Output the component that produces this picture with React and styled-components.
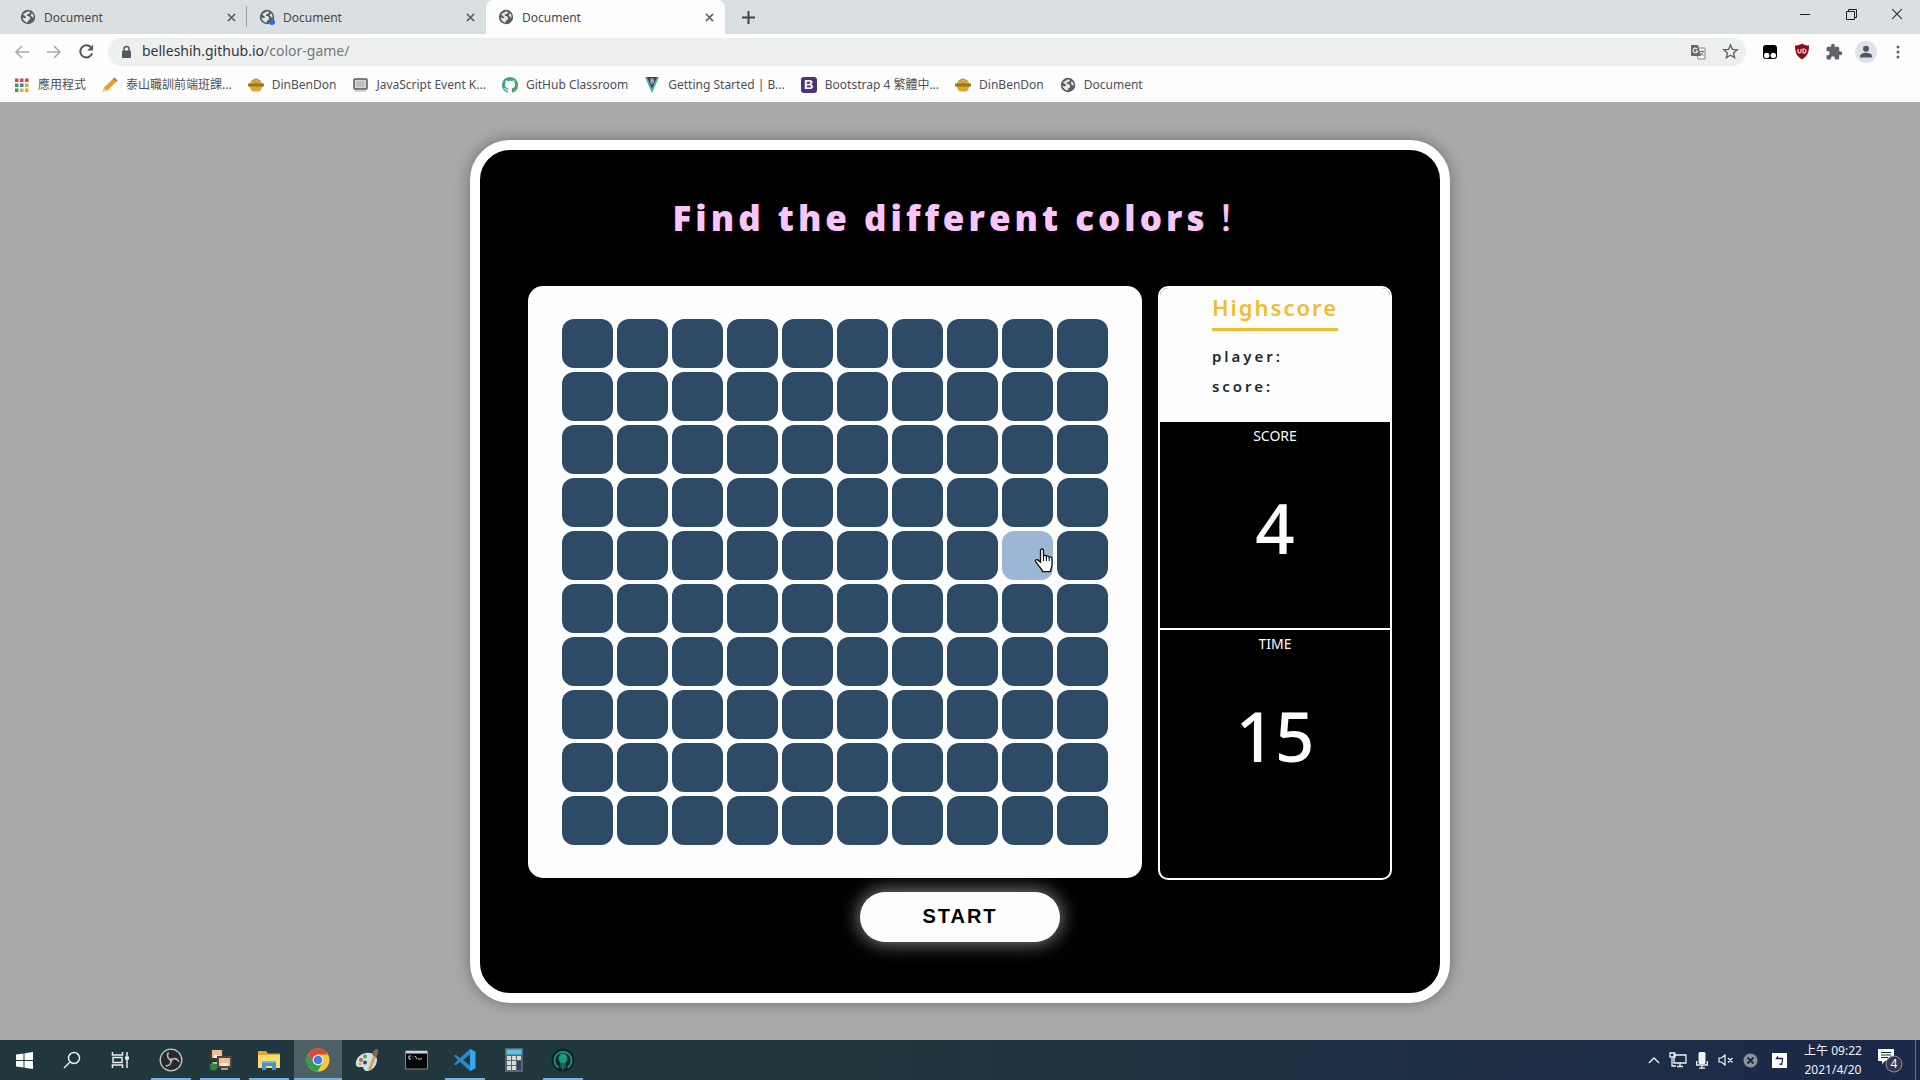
import React from "react";
import styled, { createGlobalStyle } from "styled-components";

const GlobalStyle = createGlobalStyle`
  *, *::before, *::after { box-sizing: border-box; }
  body { margin: 0; font-family: "Noto Sans", "Noto Sans CJK TC", sans-serif; }
  button { border: 0; padding: 0; margin: 0; background: none; font: inherit; color: inherit; }
  h1, h2, p { margin: 0; }
  svg { display: block; flex: none; }
`;

const Desktop = styled.div`
  display: flex;
  flex-direction: column;
  height: 100vh;
  overflow: hidden;
`;

/* ---------- browser ---------- */
const TabStrip = styled.header`
  display: flex;
  height: 34px;
  padding-left: 8px;
  background: #dadfe1;
`;

const Tab = styled.div`
  display: flex;
  align-items: center;
  width: 239px;
  height: 34px;
  padding: 0 8px 0 12px;
  gap: 8px;
  font-size: 12px;
  color: #45494d;
  background: ${(p) => (p.$active ? "#fdfdfd" : "transparent")};
  border-radius: 8px 8px 0 0;
  border-right: 1px solid ${(p) => (p.$divider ? "#9a9fa3" : "transparent")};
  border-image: ${(p) => (p.$divider ? "linear-gradient(transparent 20%, #9a9fa3 20%, #9a9fa3 78%, transparent 78%) 1" : "none")};
`;

const TabTitle = styled.span`
  flex: 1;
`;

const IconButton = styled.button`
  display: flex;
  align-items: center;
  justify-content: center;
  flex: none;
  width: ${(p) => p.$w || 32}px;
  height: ${(p) => p.$h || 28}px;
  color: ${(p) => p.$color || "#5f6368"};
`;

const WindowControls = styled.div`
  display: flex;
  margin-left: auto;
`;

const Toolbar = styled.div`
  display: flex;
  align-items: center;
  height: 36px;
  padding: 0 6px 1px;
  background: #fdfdfd;
`;

const AddressBar = styled.div`
  display: flex;
  align-items: center;
  flex: 1;
  height: 28px;
  margin: 0 8px 0 6px;
  padding-left: 12px;
  border-radius: 14px;
  background: #eef0f0;
  color: #5f6368;
`;

const Address = styled.div`
  flex: 1;
  padding-left: 9px;
  font-size: 14px;
  line-height: 20px;
  padding-bottom: 1px;
  color: #73787c;
  strong { font-weight: 400; color: #33373b; }
`;

const Bookmarks = styled.nav`
  display: flex;
  align-items: center;
  gap: 16px;
  height: 32px;
  padding: 0 14px 2px;
  background: #fdfdfd;
`;

const Bookmark = styled.a`
  display: flex;
  align-items: center;
  gap: 8px;
  font-size: 12px;
  line-height: 18px;
  white-space: nowrap;
  color: #4d5155;
  text-decoration: none;
`;

/* ---------- game ---------- */
const Page = styled.main`
  display: flex;
  flex: 1;
  align-items: center;
  justify-content: center;
  min-height: 0;
  background: #a9a9a9;
`;

const Panel = styled.section`
  box-sizing: content-box;
  width: 50%;
  padding-bottom: 51px;
  border: 10px solid #fff;
  border-radius: 40px;
  background: #000;
  box-shadow: 0 0 16px rgba(0, 0, 0, 0.35);
`;

const Title = styled.h1`
  padding: 40px 0;
  font-family: "Open Sans", "Noto Sans CJK TC", sans-serif;
  font-size: 35px;
  line-height: 56px;
  font-weight: 800;
  letter-spacing: 4px;
  text-align: center;
  white-space: nowrap;
  color: #f9c5fb;
`;

const TitleMark = styled.span`
  font-weight: 500;
`;

const Columns = styled.div`
  display: grid;
  grid-template-columns: 614fr 234fr;
  gap: 16px;
  align-items: start;
  padding: 0 5%;
`;

const Board = styled.div`
  display: grid;
  grid-template-columns: repeat(10, 1fr);
  gap: 4px;
  padding: 33px 34px;
  border-radius: 15px;
  background: #fdfdfd;
`;

const Cell = styled.button`
  position: relative;
  height: 49px;
  border-radius: 12px;
  background: ${(p) => (p.$odd ? "#9cb7d6" : "#2d4a66")};
`;

const Pointer = styled.svg`
  position: absolute;
  left: 32px;
  top: 17px;
`;

const Side = styled.aside`
  overflow: hidden;
  border: 2px solid #fdfdfd;
  border-radius: 10px;
  color: #fdfdfd;
`;

const Highscore = styled.div`
  display: flex;
  justify-content: center;
  height: 134px;
  padding-top: 4px;
  background: #fdfdfd;
  color: #20292e;
`;

const HighscoreTitle = styled.h2`
  margin-bottom: 10px;
  padding-bottom: 6px;
  border-bottom: 3px solid #efbd2e;
  font-size: 22px;
  line-height: 30px;
  font-weight: 600;
  letter-spacing: 2px;
  color: #efbd2e;
`;

const HighscoreLine = styled.p`
  font-size: 15px;
  line-height: 30px;
  font-weight: 600;
  letter-spacing: 3px;
`;

const Stat = styled.div`
  height: ${(p) => (p.$last ? 248 : 208)}px;
  padding-top: 4px;
  border-bottom: ${(p) => (p.$last ? 0 : 2)}px solid #fdfdfd;
  text-align: center;
`;

const StatLabel = styled.p`
  font-size: 14px;
  line-height: 20px;
`;

const StatValue = styled.p`
  margin-top: 41px;
  font-size: 69px;
  line-height: 80px;
  font-weight: 500;
`;

const Start = styled.button`
  display: block;
  width: 200px;
  height: 50px;
  margin: 12px auto 0;
  border-radius: 25px;
  background: #fdfdfd;
  box-shadow: 0 0 20px rgba(255, 255, 255, 0.6);
  font: bold 20px/24px "Liberation Sans", sans-serif;
  padding-bottom: 2px;
  letter-spacing: 2px;
  color: #000;
`;

/* ---------- taskbar ---------- */
const Taskbar = styled.footer`
  display: flex;
  height: 40px;
  background: linear-gradient(90deg, #20383d 0%, #20373e 45%, #1e3045 72%, #1b2848 100%);
`;

const Apps = styled.div`
  display: flex;
  gap: ${(p) => p.$gap || 0}px;
  padding-right: ${(p) => (p.$gap ? 0 : 3)}px;
`;

const AppButton = styled.button`
  display: flex;
  align-items: center;
  justify-content: center;
  width: 48px;
  height: 40px;
  background: ${(p) => (p.$active ? "#4d6064" : "transparent")};
`;

const RunningApp = styled(AppButton)`
  background:
    linear-gradient(#76b0e4, #76b0e4) bottom / ${(p) => (p.$active ? "100%" : "40px")} 2px no-repeat,
    ${(p) => (p.$active ? "#4d6064" : "transparent")};
`;

const Tray = styled.div`
  display: flex;
  align-items: center;
  margin-left: auto;
  color: #f0f2f4;
`;

const Clock = styled.time`
  width: 74px;
  font-size: 12px;
  line-height: 19px;
  text-align: center;
`;

const Edge = styled.i`
  width: 5px;
  height: 40px;
  margin-left: 5px;
  border-left: 1px solid #667087;
`;

/* ---------- icons ---------- */
const Globe = ({ dot }) => (
  <svg width="16" height="16" viewBox="0 0 16 16">
    <circle cx="8" cy="8" r="7.2" fill="#595d61" />
    <path d="M3 5.4C5 4.4 6.2 3 8.6 2.3l1.6.9-1.3 1.6-1.6.5-.7 1.5 2.2.5 1.5 1.3-.5 2-1.7 1.1-.8 2C5.400 13.200 3 11.600 2.500 8.600l2.300.7 1.300-.6-.7-1.500z" fill="#e4e7e8" />
    <path d="M11.600 4.300l1.600 1.300.4 3.200-1.400-.6-1.300-2z" fill="#e4e7e8" />
    {dot && <circle cx="13" cy="13" r="3" fill="#2b6fd4" />}
  </svg>
);

const Cross = ({ size = 9, width = 1.7 }) => (
  <svg width={size} height={size} viewBox="0 0 10 10" stroke="currentColor" strokeWidth={width} fill="none">
    <path d="M1 1l8 8M9 1l-8 8" />
  </svg>
);

const Arrow = ({ back }) => (
  <svg width="16" height="16" viewBox="0 0 16 16" fill="none" stroke="#a9acaf" strokeWidth="1.600">
    <path d={back ? "M15 8H2M8 2L2 8l6 6" : "M1 8h13M8 2l6 6-6 6"} />
  </svg>
);

const Reload = () => (
  <svg width="17" height="17" viewBox="0 0 16 16">
    <path d="M13.300 9.600A5.700 5.700 0 1 1 12.200 4.200" fill="none" stroke="#55595d" strokeWidth="1.900" />
    <path d="M14.200 1.500v5.500H8.700z" fill="#55595d" />
  </svg>
);

const Lock = () => (
  <svg width="13" height="14" viewBox="0 0 13 14">
    <rect x="2" y="5.500" width="9" height="7.500" rx="1" fill="#55595d" />
    <path d="M4 6V4a2.500 2.500 0 0 1 5 0v2" fill="none" stroke="#55595d" strokeWidth="1.500" />
  </svg>
);

const Translate = () => (
  <svg width="16" height="16" viewBox="0 0 16 16">
    <path d="M6 4h9v11H8z" fill="#f4f5f5" stroke="#85898c" />
    <path d="M1 1h7l3 11H2a1 1 0 0 1-1-1z" fill="#65696d" />
    <path d="M7.300 5.200A2.300 2.300 0 1 0 7.600 7H5.600" fill="none" stroke="#f4f5f5" strokeWidth="1.100" />
    <path d="M10 7.500h4M12 6.500v1M13.200 7.500c-.5 2-1.500 3-2.500 3.800M11 9l2.500 2.800" fill="none" stroke="#777b7e" />
  </svg>
);

const Star = () => (
  <svg width="17" height="17" viewBox="0 0 16 16">
    <path d="M8 1.800l1.800 4.200 4.500.4-3.400 3 1 4.400L8 11.500l-3.900 2.300 1-4.400-3.400-3 4.500-.4z" fill="none" stroke="#5f6368" strokeWidth="1.300" />
  </svg>
);

const Monkey = () => (
  <svg width="16" height="16" viewBox="0 0 16 16">
    <rect x="1" y="1" width="14" height="14" rx="3" fill="#000" />
    <circle cx="4.700" cy="11.500" r="2.700" fill="#fff" />
    <circle cx="11.300" cy="11.500" r="2.700" fill="#fff" />
  </svg>
);

const Shield = () => (
  <svg width="16" height="17" viewBox="0 0 16 17">
    <path d="M8 0.500C10 2 12.500 2.600 15 2.600c0 6-1 10.400-7 13.900C2 13 1 8.600 1 2.600 3.500 2.600 6 2 8 .5z" fill="#8c0d16" />
    <path d="M4 6v2.300a1.500 1.500 0 0 0 3 0V6M9 6v4h1a2 2 0 0 0 0-4z" fill="none" stroke="#f3dcdc" strokeWidth="1.200" />
  </svg>
);

const Puzzle = () => (
  <svg width="18" height="18" viewBox="0 0 24 24" fill="#5f6368">
    <path d="M20.500 11H19V7a2 2 0 0 0-2-2h-4V3.500a2.500 2.500 0 0 0-5 0V5H4a2 2 0 0 0-2 2v3.800h1.500a2.700 2.700 0 0 1 0 5.400H2V20a2 2 0 0 0 2 2h3.800v-1.500a2.700 2.700 0 0 1 5.400 0V22H17a2 2 0 0 0 2-2v-4h1.500a2.500 2.500 0 0 0 0-5z" />
  </svg>
);

const Avatar = () => (
  <svg width="22" height="22" viewBox="0 0 22 22">
    <circle cx="11" cy="11" r="11" fill="#dfe3e9" />
    <circle cx="11" cy="7.700" r="3" fill="#4e5769" />
    <path d="M5 16.500v-1.500c0-2.200 4-3.200 6-3.200s6 1 6 3.200v1.500z" fill="#4e5769" />
  </svg>
);

const Dots = () => (
  <svg width="16" height="16" viewBox="0 0 16 16" fill="#5f6368">
    <circle cx="8" cy="3" r="1.500" /><circle cx="8" cy="8" r="1.500" /><circle cx="8" cy="13" r="1.500" />
  </svg>
);

const AppsGrid = () => {
  const colors = ["#d5473f", "#d5473f", "#d5473f", "#3f9d58", "#4078d8", "#e0ad2a", "#3f9d58", "#e0ad2a", "#e0ad2a"];
  return (
    <svg width="16" height="16" viewBox="0 0 16 16">
      {colors.map((c, i) => <rect key={i} x={1 + (i % 3) * 5} y={1.5 + Math.floor(i / 3) * 5} width="3.500" height="3.500" fill={c} />)}
    </svg>
  );
};

const Pencil = () => (
  <svg width="16" height="16" viewBox="0 0 16 16">
    <path d="M1.500 11L11 1.800l3.200 3L4.800 14z" fill="#f09c2b" />
    <path d="M11 1.800L12.300.5 15.700 3.500 14.200 4.800z" fill="#dc5266" />
    <path d="M1.500 11l3.300 3L.3 15.600z" fill="#f2cf9a" />
  </svg>
);

const Bento = () => (
  <svg width="16" height="16" viewBox="0 0 16 16">
    <path d="M1.500 7L3.500 3.500 7 1.500h2l3.500 2 2 3.500z" fill="#c9992c" />
    <path d="M1.500 9h13l-1.500 4-2 1.500H5L3 13z" fill="#d9a82f" />
    <path d="M0 6.500h16v3H0z" fill="#9c761e" />
    <path d="M3 5.500h3M7 4h3M10 5.500h3" stroke="#e7c262" />
  </svg>
);

const ScreenIcon = () => (
  <svg width="16" height="16" viewBox="0 0 16 16">
    <rect x="2" y="2" width="13" height="10" rx="1" fill="#d3d5d6" stroke="#55595c" strokeWidth="1.500" />
    <path d="M4.500 5h8M4.500 7h8M4.500 9h8" stroke="#a5a8aa" />
    <path d="M3 14h11" stroke="#a9acae" />
  </svg>
);

const GitHub = () => (
  <svg width="16" height="16" viewBox="0 0 16 16" fill="#43a574">
    <path d="M8 0C3.580 0 0 3.580 0 8c0 3.540 2.290 6.530 5.470 7.590.4.070.55-.17.55-.38 0-.19-.01-.82-.01-1.490-2.010.37-2.530-.49-2.690-.94-.09-.23-.48-.94-.82-1.130-.28-.15-.68-.52-.01-.53.63-.01 1.080.58 1.230.82.72 1.210 1.870.87 2.330.66.07-.52.28-.87.51-1.070-1.780-.2-3.640-.89-3.640-3.950 0-.87.31-1.590.82-2.150-.08-.2-.36-1.020.08-2.120 0 0 .67-.21 2.200.82.64-.18 1.320-.27 2-.27s1.360.09 2 .27c1.530-1.040 2.200-.82 2.200-.82.44 1.100.16 1.920.08 2.120.51.56.82 1.270.82 2.150 0 3.070-1.870 3.750-3.650 3.950.29.25.54.73.54 1.480 0 1.070-.01 1.930-.01 2.200 0 .21.15.46.55.38A8.010 8.010 0 0 0 16 8c0-4.420-3.580-8-8-8z" />
  </svg>
);

const VueB = () => (
  <svg width="16" height="16" viewBox="0 0 16 16">
    <path d="M1 0h14L8 16z" fill="#45b58a" />
    <path d="M3 0h10L8 11.500z" fill="#3f3c5c" />
    <path d="M7 1.500v5M7 2h1.500a1 1 0 0 1 0 2H7h1.700a1.100 1.100 0 0 1 0 2.200H7" fill="none" stroke="#d9d3e6" strokeWidth=".9" />
  </svg>
);

const BootstrapMark = styled.span`
  width: 16px;
  height: 16px;
  border-radius: 3px;
  background: #4d3375;
  color: #fff;
  font: bold 13px/16px "Liberation Sans", sans-serif;
  text-align: center;
`;

const bookmarks = [
  ["應用程式", <AppsGrid />],
  ["泰山職訓前端班課...", <Pencil />],
  ["DinBenDon", <Bento />],
  ["JavaScript Event K...", <ScreenIcon />],
  ["GitHub Classroom", <GitHub />],
  ["Getting Started | B...", <VueB />],
  ["Bootstrap 4 繁體中...", <BootstrapMark>B</BootstrapMark>],
  ["DinBenDon", <Bento />],
  ["Document", <Globe />],
];

const WinLogo = () => (
  <svg width="17" height="17" viewBox="0 0 17 17" fill="#fff">
    <path d="M0 2.400L7.500 1.400V8H0zM8.500 1.200L17 0v8H8.500zM0 9h7.500v6.600L0 14.600zM8.500 9H17v8l-8.500-1.200z" />
  </svg>
);
const Search = () => (
  <svg width="18" height="18" viewBox="0 0 18 18" fill="none" stroke="#e8eced" strokeWidth="1.500">
    <circle cx="11" cy="7" r="5.500" /><path d="M7 11l-6 6" />
  </svg>
);
const TaskView = () => (
  <svg width="19" height="18" viewBox="0 0 19 18" fill="none" stroke="#e8eced" strokeWidth="1.500">
    <path d="M1.500 1v3h10V1M1.500 17v-3h10v3M2 6.500h9v5H2zM16 1v16" /><path d="M14 5.500h4v3h-4z" fill="#e8eced" stroke="none" />
  </svg>
);
const Obs = () => (
  <svg width="24" height="24" viewBox="0 0 24 24">
    <circle cx="12" cy="12" r="10.800" fill="#29272b" stroke="#c6c9ca" strokeWidth="1.300" />
    <g fill="none" stroke="#b5b8ba" strokeWidth="1.600" strokeLinecap="round">
      {[0, 120, 240].map((a) => <path key={a} transform={`rotate(${a} 12 12)`} d="M12 12c-3-1-4.500-4-2.800-7" />)}
    </g>
    <circle cx="12" cy="12" r="1.700" fill="#b5b8ba" />
  </svg>
);
const Remote = () => (
  <svg width="24" height="24" viewBox="0 0 24 24">
    <rect x="2" y="1" width="14" height="11" fill="#3f3630" /><rect x="4" y="2" width="10" height="8" fill="#e8bf99" />
    <path d="M6 7h6v3H6z" fill="#fbeee0" />
    <circle cx="5.500" cy="18.500" r="4" fill="#3d7c45" /><path d="M4 14h6v2H6z" fill="#a6c7a8" />
    <rect x="9" y="8" width="15" height="12" fill="#50443c" /><rect x="11" y="10" width="11" height="8" fill="#ebbd94" />
    <path d="M13 15h7v3h-7z" fill="#fff2e4" /><path d="M13 20h7v2h-7z" fill="#a9a198" />
  </svg>
);
const Folder = () => (
  <svg width="24" height="22" viewBox="0 0 24 22">
    <path d="M1 2h8l2 2.500h12V19H1z" fill="#e1a92d" /><path d="M1 6h22v13H1z" fill="#fadb6c" />
    <path d="M5 12h14v9h-4v-4H9v4H5z" fill="#3f93cf" /><path d="M5 12h14v2H5z" fill="#6ab5e4" />
  </svg>
);
const Chrome = () => (
  <svg width="24" height="24" viewBox="0 0 24 24">
    <circle cx="12" cy="12" r="11.500" fill="#f5c83a" />
    <path d="M2 6.300A11.500 11.500 0 0 1 22 6.500H12l-5 3.200 0 5z" fill="#dc4838" />
    <path d="M2 6.300A11.500 11.500 0 0 0 11.500 23.500l5-8.700-4.500 2.200-4.800-2.400z" fill="#2f9c53" />
    <circle cx="12" cy="12" r="5.400" fill="#f5f5f5" /><circle cx="12" cy="12" r="4.300" fill="#3f7ee0" />
  </svg>
);
const Paint = () => (
  <svg width="24" height="24" viewBox="0 0 24 24">
    <path d="M11 5C4 6 0 12 1 17c1 3 4 2 6 2s1 3 4 4c5 1 11-5 11-11 0-5-5-8-11-7z" fill="#cfe0e9" />
    <circle cx="6" cy="12" r="2" fill="#db5b4c" /><circle cx="10" cy="8.500" r="2" fill="#54a860" /><circle cx="5" cy="16" r="1.500" fill="#dfae3c" />
    <circle cx="10" cy="14.500" r="2" fill="#32505d" />
    <path d="M13 22L18 8l3 1-5 13z" fill="#d9a35b" /><path d="M18 8c-1-4 1-7 5-7 0 4 0 6-2 8z" fill="#96633a" />
  </svg>
);
const Terminal = () => (
  <svg width="23" height="20" viewBox="0 0 23 20">
    <path d="M.5 1h22v18H.5z" fill="#050607" stroke="#83898b" /><path d="M1 1h21v2.500H1z" fill="#d2d6d7" />
    <path d="M6 6H4v3h2M8 6.500v.5M8 8.500V9M10 6l2 3M13 9h4" stroke="#d4d8d9" fill="none" />
  </svg>
);
const Code = () => (
  <svg width="24" height="24" viewBox="0 0 24 24">
    <path d="M17 1L7 10 2.500 6.800 1 7.800 4.800 12 1 16.200l1.500 1L7 14l10 9V17.500L10.300 12 17 6.500z" fill="#2489cf" />
    <path d="M17 1l5.500 2.500v17L17 23z" fill="#35a7ee" />
  </svg>
);
const Calculator = () => (
  <svg width="18" height="24" viewBox="0 0 18 24">
    <path d="M0 0h18v24H0z" fill="#5c676c" /><path d="M1.500 1.500h15v5h-15z" fill="#55c5ea" />
    {[8, 13, 18].map((y) => [2, 7, 12].map((x) => <rect key={`${x}-${y}`} x={x} y={y} width="4" height="4" fill="#d6dadc" />))}
    <path d="M12 13h4v9h-4z" fill="#263f75" />
  </svg>
);
const Kraken = () => (
  <svg width="24" height="24" viewBox="0 0 24 24">
    <circle cx="12" cy="12" r="11.500" fill="#0c2529" />
    <path d="M7.500 19.500A8.500 8.500 0 1 1 16.500 19.500" fill="none" stroke="#1d9780" strokeWidth="1.700" />
    <path d="M12 5.500c3 0 4.500 3 4.500 5.500 0 2-1.500 2.500-2 3.500v5.500h-1v-5h-.9V22h-1.200v-7h-.9v5h-1v-5.500c-.5-1-2-1.500-2-3.500 0-2.500 1.500-5.500 4.500-5.500z" fill="#1d9780" />
  </svg>
);

const tasks = [
  ["OBS", <Obs />, true],
  ["Remote", <Remote />, true],
  ["Explorer", <Folder />, true],
  ["Chrome", <Chrome />, true, true],
  ["Paint", <Paint />],
  ["Terminal", <Terminal />],
  ["Code", <Code />, true],
  ["Calculator", <Calculator />],
  ["GitKraken", <Kraken />, true],
];

const tray = [
  ["Show hidden icons", <svg width="12" height="7" viewBox="0 0 14 8" fill="none" stroke="currentColor" strokeWidth="1.500"><path d="M1 7l6-6 6 6" /></svg>],
  ["Network", <svg width="18" height="16" viewBox="0 0 18 16" fill="none" stroke="currentColor" strokeWidth="1.300"><path d="M5 3h12v8H5zM8 14.500h6M11 11v3M3 6v8h4M1 1h5v4H1z" /></svg>],
  ["Microphone", <svg width="12" height="17" viewBox="0 0 12 17" fill="currentColor"><rect x="2.500" y="0" width="7" height="12" rx="1.500" /><path d="M.7 9v4h10.600V9M6 13v3M3 16.200h6" fill="none" stroke="currentColor" strokeWidth="1.300" /></svg>],
  ["Volume", <svg width="16" height="14" viewBox="0 0 16 14" fill="none" stroke="currentColor" strokeWidth="1.200"><path d="M1 5h2.500L7 2v10L3.500 9H1zM10 5l4.500 4.500M14.500 5L10 9.500" /></svg>],
  ["Status", <svg width="15" height="15" viewBox="0 0 15 15"><circle cx="7.500" cy="7.500" r="7" fill="#8d949e" /><path d="M4.500 4.500l6 6M10.500 4.500l-6 6" stroke="#1c2a44" strokeWidth="1.800" /></svg>],
];

const ODD_CELL = 48;

export default function App() {
  return (
    <Desktop>
      <GlobalStyle />
      <TabStrip>
        {[0, 1, 2].map((i) => (
          <Tab key={i} $active={i === 2} $divider={i === 0}>
            <Globe dot={i === 1} />
            <TabTitle>Document</TabTitle>
            <IconButton $w={14} $h={14} aria-label="Close tab"><Cross /></IconButton>
          </Tab>
        ))}
        <IconButton $w={46} $h={34} aria-label="New tab" $color="#3f4347">
          <svg width="13" height="13" viewBox="0 0 13 13" stroke="currentColor" strokeWidth="2"><path d="M6.500 0v13M0 6.500h13" /></svg>
        </IconButton>
        <WindowControls>
          <IconButton $w={46} $color="#222" aria-label="Minimize">
            <svg width="10" height="10" viewBox="0 0 10 10" stroke="currentColor"><path d="M0 5.500h10" /></svg>
          </IconButton>
          <IconButton $w={46} $color="#222" aria-label="Restore">
            <svg width="11" height="11" viewBox="0 0 11 11" stroke="currentColor" fill="none"><path d="M.5 2.500h8v8h-8zM2.500 2.500v-2h8v8h-2" /></svg>
          </IconButton>
          <IconButton $w={46} $color="#333" aria-label="Close window"><Cross size={12} width={1} /></IconButton>
        </WindowControls>
      </TabStrip>
      <Toolbar>
        <IconButton aria-label="Back"><Arrow back /></IconButton>
        <IconButton aria-label="Forward"><Arrow /></IconButton>
        <IconButton aria-label="Reload"><Reload /></IconButton>
        <AddressBar>
          <Lock />
          <Address><strong>belleshih.github.io</strong>/color-game/</Address>
          <IconButton aria-label="Translate"><Translate /></IconButton>
          <IconButton aria-label="Bookmark this page"><Star /></IconButton>
        </AddressBar>
        <IconButton aria-label="Tampermonkey"><Monkey /></IconButton>
        <IconButton aria-label="uBlock"><Shield /></IconButton>
        <IconButton aria-label="Extensions"><Puzzle /></IconButton>
        <IconButton aria-label="Profile"><Avatar /></IconButton>
        <IconButton aria-label="Menu"><Dots /></IconButton>
      </Toolbar>
      <Bookmarks>
        {bookmarks.map(([label, icon], i) => (
          <Bookmark key={i} href="#">{icon}{label}</Bookmark>
        ))}
      </Bookmarks>

      <Page>
        <Panel>
          <Title>Find the different colors<TitleMark>！</TitleMark></Title>
          <Columns>
            <Board>
              {Array.from({ length: 100 }, (_, i) => (
                <Cell key={i} $odd={i === ODD_CELL} aria-label={`Tile ${i + 1}`}>
                  {i === ODD_CELL && (
                    <Pointer width="20" height="25" viewBox="0 0 20 25">
                      <path d="M6.500 2.500c0-2 3-2 3 0V8c.5-1 2.700-.8 2.900.5.6-.9 2.500-.6 2.700.7.900-.7 2.900-.2 2.900 1.500v6c0 3-1.500 4-1.500 7H8.500c0-2-2-3.500-3.500-5.500-1.200-1.600-2-3.200-3.200-4.300-1.300-1.400.5-2.900 2-2l2.700 2.200z" fill="#fff" stroke="#111" strokeWidth="1.300" />
                      <path d="M9.500 8v5M12.400 9v4M15.200 10v3" stroke="#111" strokeWidth="1.100" />
                    </Pointer>
                  )}
                </Cell>
              ))}
            </Board>
            <Side>
              <Highscore>
                <div>
                  <HighscoreTitle>Highscore</HighscoreTitle>
                  <HighscoreLine>player:</HighscoreLine>
                  <HighscoreLine>score:</HighscoreLine>
                </div>
              </Highscore>
              <Stat>
                <StatLabel>SCORE</StatLabel>
                <StatValue>4</StatValue>
              </Stat>
              <Stat $last>
                <StatLabel>TIME</StatLabel>
                <StatValue>15</StatValue>
              </Stat>
            </Side>
          </Columns>
          <Start>START</Start>
        </Panel>
      </Page>

      <Taskbar>
        <Apps>
          <AppButton aria-label="Start menu"><WinLogo /></AppButton>
          <AppButton aria-label="Search"><Search /></AppButton>
          <AppButton aria-label="Task view"><TaskView /></AppButton>
        </Apps>
        <Apps $gap={1}>
          {tasks.map(([name, icon, open, active]) => {
            const Item = open ? RunningApp : AppButton;
            return <Item key={name} aria-label={name} $active={active}>{icon}</Item>;
          })}
        </Apps>
        <Tray>
          {tray.map(([name, icon]) => (
            <IconButton key={name} $w={24} $color="inherit" aria-label={name}>{icon}</IconButton>
          ))}
          <IconButton $w={34} $color="inherit" aria-label="Input method">
            <svg width="15" height="15" viewBox="0 0 15 15"><path d="M0 0h15v15H0z" fill="#fff" /><path d="M6 3.500L4.500 5.500h6c0 3-.3 4.500-1 6L7.500 11" fill="none" stroke="#1b2843" strokeWidth="1.300" /></svg>
          </IconButton>
          <Clock>上午 09:22<br />2021/4/20</Clock>
          <IconButton $w={40} $color="inherit" aria-label="4 notifications">
            <svg width="26" height="26" viewBox="0 0 26 26">
              <path d="M1 2h16v12H8l-3 3v-3H1z" fill="#fff" /><path d="M4 5.500h10M4 8h10M4 10.500h7" stroke="#1b2848" />
              <circle cx="17" cy="17" r="8" fill="#32394a" stroke="#8b8f99" />
              <text x="17" y="21" fontSize="12" textAnchor="middle" fill="#fff">4</text>
            </svg>
          </IconButton>
          <Edge />
        </Tray>
      </Taskbar>
    </Desktop>
  );
}
